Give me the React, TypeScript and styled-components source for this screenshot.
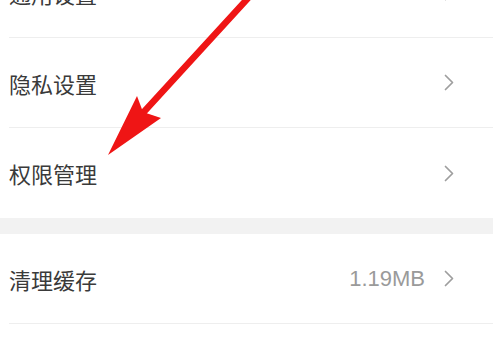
import React from "react";
import styled, { createGlobalStyle } from "styled-components";

const GlobalStyle = createGlobalStyle`
  html, body {
    margin: 0;
    padding: 0;
    background: #ffffff;
  }
  * { box-sizing: border-box; }
`;

const Viewport = styled.div`
  position: relative;
  width: 493px;
  height: 349px;
  overflow: hidden;
  background: #ffffff;
`;

const List = styled.div`
  display: flex;
  flex-direction: column;
  margin-top: -52px;
`;

const Group = styled.div`
  display: flex;
  flex-direction: column;
  background: #ffffff;
`;

const GroupGap = styled.div`
  height: 16px;
  background: #f2f2f2;
`;

const Row = styled.div<{ $divided?: boolean }>`
  display: flex;
  align-items: center;
  height: 90px;
  margin-left: 9px;
  padding-right: 39px;
  border-bottom: ${(p) => (p.$divided ? "1px solid #eeeeee" : "none")};
`;

const Label = styled.span`
  flex: 1;
  font-family: "Noto Sans CJK SC", "Noto Sans", sans-serif;
  font-size: 22px;
  line-height: 1;
  color: #3a3a3a;
`;

const Value = styled.span`
  font-family: "Liberation Sans", Arial, sans-serif;
  font-size: 22px;
  line-height: 1;
  color: #9a9a9a;
  margin-right: 19px;
`;

const Chevron = styled.svg`
  width: 10px;
  height: 17px;
  flex: none;
`;

const ArrowLayer = styled.svg`
  position: absolute;
  left: 0;
  top: 0;
  width: 493px;
  height: 349px;
  pointer-events: none;
`;

const ChevronIcon = () => (
  <Chevron viewBox="0 0 10 17">
    <polyline
      points="1.5,1.5 8.5,8.5 1.5,15.5"
      fill="none"
      stroke="#9e9e9e"
      strokeWidth="1.7"
      strokeLinecap="round"
      strokeLinejoin="round"
    />
  </Chevron>
);

type Item = { label: string; value?: string; divided?: boolean };

const groups: Item[][] = [
  [
    { label: "通用设置", divided: true },
    { label: "隐私设置", divided: true },
    { label: "权限管理" },
  ],
  [
    { label: "清理缓存", value: "1.19MB", divided: true },
    { label: "" },
  ],
];

export default function App() {
  return (
    <>
      <GlobalStyle />
      <Viewport>
        <List>
          {groups.map((g, gi) => (
            <React.Fragment key={gi}>
              {gi > 0 && <GroupGap />}
              <Group>
                {g.map((item, i) => (
                  <Row key={i} $divided={item.divided}>
                    <Label>{item.label}</Label>
                    {item.value && <Value>{item.value}</Value>}
                    {item.label && <ChevronIcon />}
                  </Row>
                ))}
              </Group>
            </React.Fragment>
          ))}
        </List>
        <ArrowLayer viewBox="0 0 493 349">
          <line
            x1="250"
            y1="-4"
            x2="141"
            y2="115"
            stroke="#ef1515"
            strokeWidth="6.5"
            strokeLinecap="round"
          />
          <polygon points="108,155 137,96 143,112 161,118" fill="#ef1515" />
        </ArrowLayer>
      </Viewport>
    </>
  );
}
